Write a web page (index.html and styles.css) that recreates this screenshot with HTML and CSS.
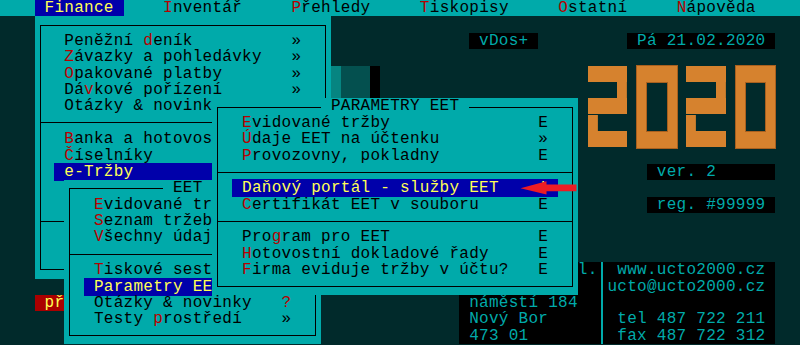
FILE: index.html
```html
<!DOCTYPE html>
<html lang="cs">
<head>
    <meta charset="UTF-8">
    <meta name="viewport" content="width=device-width, initial-scale=1.0">
    <title>UCTO 2000 - Finance</title>
    <link rel="stylesheet" href="styles.css">
</head>
<body>
    <div class="screen">
        <!-- desktop -->
        <div class="tag vdos"> vDos+ </div>
        <div class="tag date"> Pá 21.02.2020 </div>
        <div class="chip"><i class="c1"></i><i class="c2"></i><i class="c3"></i></div>
        <div class="logo">
            <div class="d2"></div>
            <div class="d0"></div>
            <div class="d2"></div>
            <div class="d0"></div>
        </div>
        <div class="tag ver"> ver. 2</div>
        <div class="tag reg"> reg. #99999</div>
        <div class="addr">
            <div class="addr-l">
                <div class="ln tail">l.</div>
                <div class="ln"></div>
                <div class="ln"> náměstí 184</div>
                <div class="ln"> Nový Bor</div>
                <div class="ln"> 473 01</div>
            </div>
            <div class="addr-bar"></div>
            <div class="addr-r">
                <div class="ln"> www.ucto2000.cz</div>
                <div class="ln">ucto@ucto2000.cz</div>
                <div class="ln"></div>
                <div class="ln"> tel 487 722 211</div>
                <div class="ln"> fax 487 722 312</div>
            </div>
        </div>
        <div class="login"> př</div>

        <!-- menu -->
        <div class="menubar">   <span class="sel"> Finance </span>    <span class="k">I</span>nventář     <span class="k">P</span>řehledy     <span class="k">T</span>iskopisy     <span class="k">O</span>statní     <span class="k">N</span>ápověda</div>

        <div class="win fin">
            <div class="frame">
                <div class="ln">  Peněžní <span class="k">d</span>eník          »</div>
                <div class="ln">  <span class="k">Z</span>ávazky a pohledávky   »</div>
                <div class="ln">  <span class="k">O</span>pakované platby       »</div>
                <div class="ln">  Dá<span class="k">v</span>kové pořízení       »</div>
                <div class="ln">  Otázky &amp; novink</div>
                <div class="sep"></div>
                <div class="ln">  <span class="k">B</span>anka a hotovos</div>
                <div class="ln">  <span class="k">Č</span>íselníky</div>
                <div class="ln"> <span class="hl"> e-Tržby        </span></div>
                <div class="ln"></div>
                <div class="ln"></div>
                <div class="sep"></div>
                <div class="ln"></div>
                <div class="ln"></div>
            </div>
        </div>

        <div class="win eet">
            <div class="frame">
                <div class="ttl t-eet"> EET </div>
                <div class="ln">  <span class="k">E</span>vidované tr</div>
                <div class="ln">  <span class="k">S</span>eznam tržeb</div>
                <div class="ln">  <span class="k">V</span>šechny údaj</div>
                <div class="sep"></div>
                <div class="ln">  <span class="k">T</span>iskové sest</div>
                <div class="ln"> <span class="hl"> Parametry EE</span></div>
                <div class="ln">  Otázky &amp; novinky   <span class="k">?</span></div>
                <div class="ln">  Testy <span class="k">p</span>rostředí    »</div>
            </div>
        </div>

        <div class="win par">
            <div class="frame">
                <div class="ttl t-par"> PARAMETRY EET </div>
                <div class="ln">  <span class="k">E</span>vidované tržby               E</div>
                <div class="ln">  <span class="k">Ú</span>daje EET na účtenku          »</div>
                <div class="ln">  <span class="k">P</span>rovozovny, pokladny          E</div>
                <div class="sep"></div>
                <div class="ln"> <span class="hl"> Daňový portál - služby EET    ! </span></div>
                <div class="ln">  <span class="k">C</span>ertifikát EET v souboru      E</div>
                <div class="sep"></div>
                <div class="ln">  Pro<span class="k">g</span>ram pro EET               E</div>
                <div class="ln">  <span class="k">H</span>otovostní dokladové řady     E</div>
                <div class="ln">  <span class="k">F</span>irma eviduje tržby v účtu?   E</div>
            </div>
        </div>

        <svg class="arrow" viewBox="0 0 59.25 16.4" preserveAspectRatio="none">
            <polygon points="1.5,8.2 27.5,1.3 27.5,4.6 57.5,4.6 57.5,11.3 27.5,11.3 27.5,14.6" fill="#ec1c24"/>
        </svg>
    </div>
</body>
</html>
```

FILE: styles.css
```css
/* text mode screen: 80 cols x 9.875px, rows of 16.4px */
body {
    margin: 0;
    background-color: #012a2b;
}

.screen {
    display: grid;
    grid-template-columns: 5px repeat(80, 9.875px) 5px;
    grid-template-rows: repeat(21, 16.4px);
    width: 800px;
    height: 345px;
    overflow: hidden;
    background-color: #012a2b;
    font-family: "Liberation Mono", "DejaVu Sans Mono", monospace;
    font-size: 16px;
    line-height: 16.4px;
    letter-spacing: 0.2736px;
    color: #000;
}

.ln {
    height: 16.4px;
    white-space: pre;
}

.k {
    color: #b80000;
}

.hl,
.sel {
    background-color: #0000aa;
    color: #ffff55;
}

/* desktop boxes */
.tag {
    background-color: #000;
    color: #00aaaa;
    white-space: pre;
}

.vdos {
    grid-column: 49 / 56;
    grid-row: 3;
}

.date {
    grid-column: 65 / 80;
    grid-row: 3;
}

.ver {
    grid-column: 67 / 80;
    grid-row: 11;
}

.reg {
    grid-column: 67 / 80;
    grid-row: 13;
}

.chip {
    grid-column: 35 / 40;
    grid-row: 5 / 7;
    display: flex;
}

.chip i {
    display: block;
}

.chip .c1 {
    width: 9.875px;
    background-color: #068581;
}

.chip .c2 {
    width: 29.625px;
    background-color: #04504f;
}

.chip .c3 {
    flex: 1;
    background-color: #000;
}

.logo {
    grid-column: 61 / 80;
    grid-row: 5 / 10;
    display: flex;
    gap: 9.875px;
}

.d0,
.d2 {
    width: 39.5px;
    box-sizing: border-box;
}

.d0 {
    border: solid #d6822e;
    border-width: 16.4px 9.875px;
    box-shadow: 0 0 0 1px #a8601f, inset 0 0 0 1px #a8601f;
}

.d2 {
    background:
        linear-gradient(#d6822e, #d6822e) 0 0 / 100% 16.4px,
        linear-gradient(#d6822e, #d6822e) 100% 16.4px / 9.875px 16.4px,
        linear-gradient(#d6822e, #d6822e) 0 32.8px / 100% 16.4px,
        linear-gradient(#d6822e, #d6822e) 0 49.2px / 9.875px 16.4px,
        linear-gradient(#d6822e, #d6822e) 0 100% / 100% 16.4px;
    background-repeat: no-repeat;
}

.addr {
    grid-column: 48 / 80;
    grid-row: 17 / 22;
    display: flex;
    background-color: #000;
    color: #00aaaa;
}

.addr-l {
    width: 138.25px;
}

.addr-l .tail {
    padding-left: 118.5px;
}

.addr-bar {
    width: 9.875px;
    background: linear-gradient(#00aaaa, #00aaaa) 50% 0 / 2px 100% no-repeat;
}

.addr-r {
    flex: 1;
}

.login {
    grid-column: 5 / 8;
    grid-row: 19;
    background-color: #aa0000;
    color: #ffff55;
    white-space: pre;
}

/* menu bar and windows */
.menubar {
    grid-column: 1 / -1;
    grid-row: 1;
    padding-left: 5px;
    background-color: #00aaaa;
    white-space: pre;
}

.win {
    display: flex;
    flex-direction: column;
    background-color: #00aaaa;
}

.fin {
    grid-column: 5 / 35;
    grid-row: 2 / 18;
}

.eet {
    grid-column: 8 / 34;
    grid-row: 12 / 22;
}

.par {
    grid-column: 23 / 60;
    grid-row: 7 / 19;
}

.frame {
    flex: 1;
    display: flex;
    flex-direction: column;
    margin: 8.2px 4.9375px;
    padding-top: 7.2px;
    border: 1px solid #000;
}

.frame .ln {
    padding-left: 3.9375px;
}

.sep {
    height: 16.4px;
    background: linear-gradient(#000, #000) 0 50% / 100% 1px no-repeat;
}

.ttl {
    align-self: flex-start;
    height: 16.4px;
    margin-top: -16.4px;
    background-color: #00aaaa;
    white-space: pre;
}

.t-eet {
    margin-left: 92.8125px;
}

.t-par {
    margin-left: 102.6875px;
}

.arrow {
    grid-column: 54 / 60;
    grid-row: 12;
    width: 100%;
    height: 100%;
}
```
